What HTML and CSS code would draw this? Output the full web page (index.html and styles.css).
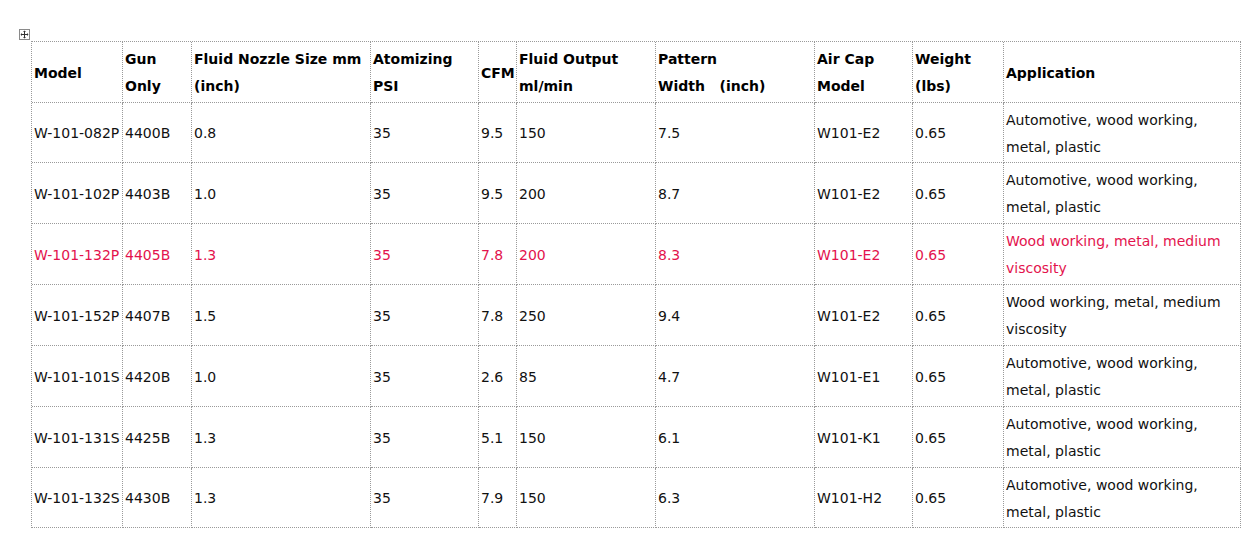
FILE: index.html
```html
<!DOCTYPE html>
<html>
<head>
<meta charset="utf-8">
<link rel="stylesheet" href="styles.css">
</head>
<body>
<div class="page">
  <span class="move-handle">
    <svg width="11" height="11" viewBox="0 0 11 11">
      <rect x="0.5" y="0.5" width="10" height="10" fill="#fff" stroke="#8a8a8a"/>
      <path d="M5.5 2v7M2 5.5h7" stroke="#333" stroke-width="1" fill="none"/>
      <path d="M5.5 1.5l-1.5 1.5h3zM5.5 9.5l-1.5-1.5h3zM1.5 5.5l1.5-1.5v3zM9.5 5.5l-1.5-1.5v3z" fill="#333"/>
    </svg>
  </span>
  <table class="spec">
    <thead>
      <tr class="head">
        <th class="c1">Model</th>
        <th class="c2">Gun<br>Only</th>
        <th class="c3">Fluid Nozzle Size mm<br>(inch)</th>
        <th class="c4">Atomizing<br>PSI</th>
        <th class="c5">CFM</th>
        <th class="c6">Fluid Output<br>ml/min</th>
        <th class="c7">Pattern<br>Width&nbsp;&nbsp; (inch)</th>
        <th class="c8">Air Cap<br>Model</th>
        <th class="c9">Weight<br>(lbs)</th>
        <th class="c10">Application</th>
      </tr>
    </thead>
    <tbody>
      <tr class="r60">
        <td>W-101-082P</td><td>4400B</td><td>0.8</td><td>35</td><td>9.5</td><td>150</td><td>7.5</td><td>W101-E2</td><td>0.65</td><td>Automotive, wood working, metal, plastic</td>
      </tr>
      <tr class="r61">
        <td>W-101-102P</td><td>4403B</td><td>1.0</td><td>35</td><td>9.5</td><td>200</td><td>8.7</td><td>W101-E2</td><td>0.65</td><td>Automotive, wood working, metal, plastic</td>
      </tr>
      <tr class="r61 hl">
        <td>W-101-132P</td><td>4405B</td><td>1.3</td><td>35</td><td>7.8</td><td>200</td><td>8.3</td><td>W101-E2</td><td>0.65</td><td>Wood working, metal, medium viscosity</td>
      </tr>
      <tr class="r61">
        <td>W-101-152P</td><td>4407B</td><td>1.5</td><td>35</td><td>7.8</td><td>250</td><td>9.4</td><td>W101-E2</td><td>0.65</td><td>Wood working, metal, medium viscosity</td>
      </tr>
      <tr class="r61">
        <td>W-101-101S</td><td>4420B</td><td>1.0</td><td>35</td><td>2.6</td><td>85</td><td>4.7</td><td>W101-E1</td><td>0.65</td><td>Automotive, wood working, metal, plastic</td>
      </tr>
      <tr class="r61">
        <td>W-101-131S</td><td>4425B</td><td>1.3</td><td>35</td><td>5.1</td><td>150</td><td>6.1</td><td>W101-K1</td><td>0.65</td><td>Automotive, wood working, metal, plastic</td>
      </tr>
      <tr class="r60">
        <td>W-101-132S</td><td>4430B</td><td>1.3</td><td>35</td><td>7.9</td><td>150</td><td>6.3</td><td>W101-H2</td><td>0.65</td><td>Automotive, wood working, metal, plastic</td>
      </tr>
    </tbody>
  </table>
</div>
</body>
</html>
```

FILE: styles.css
```css
html, body {
  margin: 0;
  padding: 0;
  background: #ffffff;
  overflow: hidden;
}

.page {
  position: relative;
  padding: 41px 0 0 31px;
}

.move-handle {
  position: absolute;
  left: 19px;
  top: 29px;
  width: 11px;
  height: 11px;
  line-height: 0;
}

.spec {
  border-collapse: separate;
  border-spacing: 0;
  table-layout: fixed;
  width: 1210px;
  border-top: 1px dotted #9a9a9a;
  border-left: 1px dotted #9a9a9a;
  font-family: "DejaVu Sans", Verdana, sans-serif;
  font-size: 14px;
  line-height: 27px;
  color: #111;
}

.spec th,
.spec td {
  box-sizing: border-box;
  border-right: 1px dotted #9a9a9a;
  border-bottom: 1px dotted #9a9a9a;
  padding: 2px 0 0 2px;
  vertical-align: middle;
  text-align: left;
  white-space: normal;
  overflow: hidden;
}

.spec th {
  font-weight: bold;
  height: 61px;
  color: #000;
}

.c1 { width: 91px; }
.c2 { width: 69px; }
.c3 { width: 179px; }
.c4 { width: 108px; }
.c5 { width: 38px; }
.c6 { width: 139px; }
.c7 { width: 159px; }
.c8 { width: 98px; }
.c9 { width: 91px; }
.c10 { width: 237px; }

.r60 td { height: 60px; }
.r61 td { height: 61px; }

.spec td:last-child {
  padding-right: 6px;
}

.hl td {
  color: #e3134d;
}
```
